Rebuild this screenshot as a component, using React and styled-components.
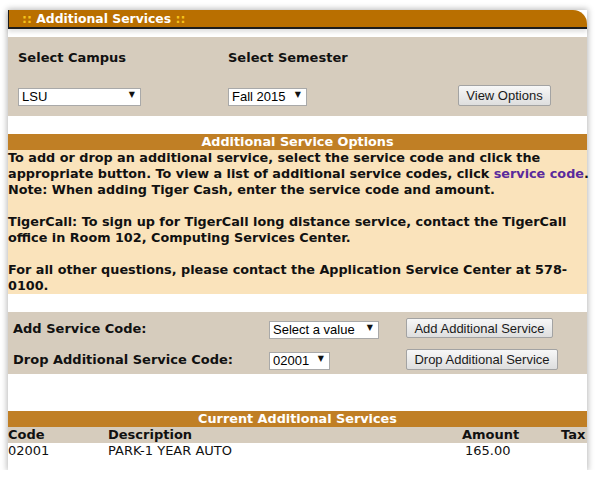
import React from "react";
import styled, { createGlobalStyle } from "styled-components";

const GlobalStyle = createGlobalStyle`
  body {
    margin: 0;
    background: #ffffff;
    font-family: "DejaVu Sans", Verdana, sans-serif;
  }
`;

const Page = styled.div`
  width: 579px;
  height: 460px;
  margin: 10px 0 0 8px;
  background: #ffffff;
  box-shadow: 0 0 6px 1px rgba(0, 0, 0, 0.28);
  display: flex;
  flex-direction: column;
`;

const Header = styled.div`
  height: 17px;
  background: #b96f00;
  border-left: 1px solid #1c1c1c;
  border-bottom: 2px solid #1c1c1c;
  border-top-right-radius: 14px;
  box-shadow: 0 3px 4px rgba(0, 0, 0, 0.12);
  padding-left: 13px;
  font-weight: bold;
  font-size: 12.4px;
  line-height: 17px;
  color: #ffffff;
  span {
    color: #f7c21b;
  }
`;

const Panel = styled.div`
  background: #d6ccbd;
  margin-top: ${p => p.top || 0}px;
`;

const CampusGrid = styled.div`
  display: grid;
  grid-template-columns: 210px 230px auto;
  grid-template-rows: 40px 39px;
  padding-left: 10px;
  align-items: center;
  .label {
    font-weight: bold;
    font-size: 13px;
    color: #111;
    padding-top: 1px;
  }
  .controls {
    margin-top: -3px;
  }
`;

const SelectWrap = styled.div`
  position: relative;
  width: ${p => p.w}px;
  height: 18px;
  select {
    appearance: none;
    -webkit-appearance: none;
    width: 100%;
    height: 18px;
    box-sizing: border-box;
    border: 1px solid #a9a9a9;
    background: #ffffff;
    font-family: "Liberation Sans", Arial, sans-serif;
    font-size: 13px;
    color: #000;
    padding: 0 0 0 3px;
    margin: 0;
    border-radius: 0;
  }
  &::after {
    content: "▼";
    position: absolute;
    right: 6px;
    top: 4px;
    font-size: 8px;
    color: #111;
    pointer-events: none;
  }
`;

const Button = styled.button`
  height: ${p => p.h || 21}px;
  width: ${p => p.w}px;
  box-sizing: border-box;
  border: 1px solid #a3a3a3;
  border-radius: 2px;
  background: linear-gradient(#f7f7f7, #dedede);
  font-family: "Liberation Sans", Arial, sans-serif;
  font-size: 13px;
  color: #1a1a1a;
  padding: 0;
  margin: 0;
`;

const BarTitle = styled.div`
  background: #c07f25;
  height: 16px;
  line-height: 16px;
  text-align: center;
  color: #ffffff;
  font-weight: bold;
  font-size: 12.8px;
  margin-top: ${p => p.top || 0}px;
`;

const Info = styled.div`
  background: #fae3bb;
  font-weight: bold;
  font-size: 12.8px;
  line-height: 16px;
  color: #111;
  white-space: nowrap;
  p {
    margin: 0 0 16px 0;
  }
  p:last-child {
    margin-bottom: 0;
  }
  a {
    color: #5a2a9c;
    text-decoration: none;
  }
`;

const ServiceGrid = styled.div`
  display: grid;
  grid-template-columns: 256px 137px auto;
  grid-template-rows: 32px 30px;
  padding-left: 5px;
  align-items: center;
  .label {
    font-weight: bold;
    font-size: 13px;
    color: #111;
  }
`;

const TableRow = styled.div`
  display: grid;
  grid-template-columns: 100px 354px 99px auto;
  height: 16px;
  line-height: 16px;
  font-size: 13px;
  font-weight: ${p => (p.head ? "bold" : "normal")};
  color: #111;
  background: ${p => (p.head ? "#d6ccbd" : "transparent")};
  white-space: nowrap;
  overflow: hidden;
`;

const Cell = styled.div`
  padding-left: ${p => p.pad || 0}px;
`;

export default function App() {
  return (
    <>
      <GlobalStyle />
      <Page>
        <Header>
          <span>:: </span>Additional Services<span> ::</span>
        </Header>

        <Panel top={8}>
          <CampusGrid>
            <div className="label">Select Campus</div>
            <div className="label">Select Semester</div>
            <div />
            <SelectWrap w={123} className="controls">
              <select defaultValue="LSU">
                <option>LSU</option>
              </select>
            </SelectWrap>
            <SelectWrap w={79} className="controls">
              <select defaultValue="Fall 2015">
                <option>Fall 2015</option>
              </select>
            </SelectWrap>
            <Button w={93} className="controls">View Options</Button>
          </CampusGrid>
        </Panel>

        <BarTitle top={18}>Additional Service Options</BarTitle>
        <Info>
          <p>
            To add or drop an additional service, select the service code and
            click the
            <br />
            appropriate button. To view a list of additional service codes,
            click <a href="#">service code</a>.
            <br />
            Note: When adding Tiger Cash, enter the service code and amount.
          </p>
          <p>
            TigerCall: To sign up for TigerCall long distance service, contact
            the TigerCall
            <br />
            office in Room 102, Computing Services Center.
          </p>
          <p>
            For all other questions, please contact the Application Service
            Center at 578-
            <br />
            0100.
          </p>
        </Info>

        <Panel top={18}>
          <ServiceGrid>
            <div className="label">Add Service Code:</div>
            <SelectWrap w={110}>
              <select defaultValue="Select a value">
                <option>Select a value</option>
              </select>
            </SelectWrap>
            <Button w={147} h={20}>Add Additional Service</Button>
            <div className="label">Drop Additional Service Code:</div>
            <SelectWrap w={61}>
              <select defaultValue="02001">
                <option>02001</option>
              </select>
            </SelectWrap>
            <Button w={152}>Drop Additional Service</Button>
          </ServiceGrid>
        </Panel>

        <BarTitle top={37}>Current Additional Services</BarTitle>
        <TableRow head>
          <Cell>Code</Cell>
          <Cell>Description</Cell>
          <Cell>Amount</Cell>
          <Cell>Tax</Cell>
        </TableRow>
        <TableRow>
          <Cell>02001</Cell>
          <Cell>PARK-1 YEAR AUTO</Cell>
          <Cell pad={3}>165.00</Cell>
          <Cell />
        </TableRow>
      </Page>
    </>
  );
}
